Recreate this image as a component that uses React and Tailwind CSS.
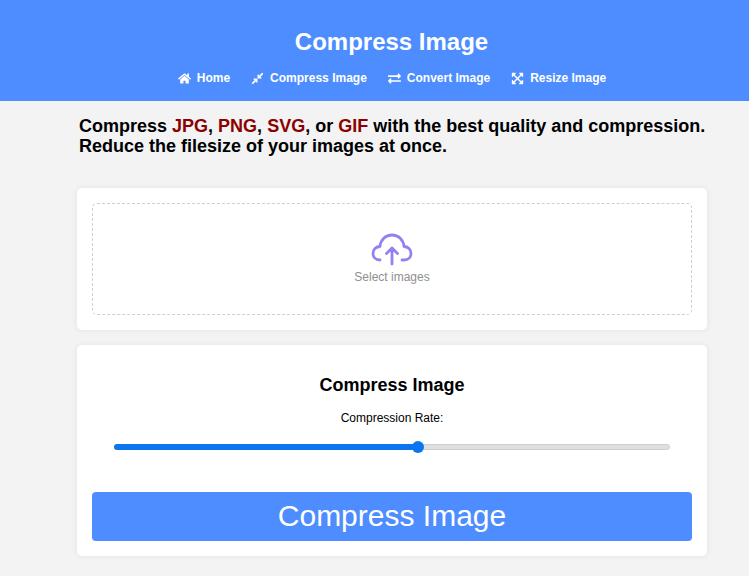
import { FaHome, FaCompressAlt, FaExchangeAlt, FaExpandArrowsAlt } from "react-icons/fa";

const links = [
  { label: "Home", icon: FaHome },
  { label: "Compress Image", icon: FaCompressAlt },
  { label: "Convert Image", icon: FaExchangeAlt },
  { label: "Resize Image", icon: FaExpandArrowsAlt },
];

function Header() {
  return (
    <header className="h-[101px] bg-[#4d8dff] pl-[34px] text-white flex flex-col items-center">
      <h1 className="mt-[27px] text-[24px] leading-[30px] font-bold">Compress Image</h1>
      <nav className="mt-[13px] ml-[1px] flex gap-[21px] text-[12px] leading-[16px] font-bold">
        {links.map(({ label, icon: Icon }) => (
          <a key={label} className="flex items-center gap-[6px]">
            <Icon className="text-[13px]" />
            {label}
          </a>
        ))}
      </nav>
    </header>
  );
}

function UploadCard() {
  return (
    <section className="h-[142px] rounded-[5px] bg-white p-[15px] shadow-[0_0_6px_rgba(0,0,0,0.07)]">
      <div className="h-full rounded-[5px] border border-dashed border-[#cfcfcf] flex flex-col items-center pt-[29px]">
        {/* cloud with arrow */}
        <svg width="42" height="36" viewBox="0 0 42 36" fill="none" stroke="#9680f0" strokeWidth="2.8" strokeLinecap="round" strokeLinejoin="round">
          <path d="M9 27C4.500 27 2 24 2 20.500C2 16.500 5 13.500 9 13.500C9.500 7 14.500 2 21 2C27.500 2 32.500 7 33 13.500C37 13.500 40 16.500 40 20.500C40 24 37.500 27 33 27H31" />
          <path d="M21 31V15M15.500 20.500L21 15 26.500 20.500" />
        </svg>
        <p className="mt-[1px] text-[12px] leading-[14px] text-[#8f8f8f]">Select images</p>
      </div>
    </section>
  );
}

function CompressCard() {
  return (
    <section className="mt-[15px] h-[211px] rounded-[5px] bg-white px-[15px] pt-[29px] shadow-[0_0_6px_rgba(0,0,0,0.07)] flex flex-col items-center">
      <h2 className="text-[18px] leading-[22px] font-bold text-black">Compress Image</h2>
      <p className="mt-[15px] text-[12px] leading-[14px] text-black">Compression Rate:</p>
      <div className="mt-[19px] relative w-[556px] h-[6px] rounded-full bg-[#e0e0e0] border border-[#cfcfcf]">
        <div className="absolute -left-px -top-px h-[6px] w-[304px] rounded-full bg-[#0b75f0]" />
        <div className="absolute left-[297px] top-[-4px] w-[12px] h-[12px] rounded-full bg-[#0b75f0]" />
      </div>
      <button className="mt-[42px] w-full h-[49px] rounded-[4px] bg-[#4d8dff] pb-[2px] text-white text-[30px] leading-[47px]">
        Compress Image
      </button>
    </section>
  );
}

export default function App() {
  return (
    <div className="min-h-[576px] h-screen overflow-hidden bg-[#f3f3f3] font-['Liberation_Sans',Arial,sans-serif]">
      <Header />
      <main className="ml-[77px] w-[630px]">
        <p className="mt-[15px] ml-[2px] w-[640px] text-[18px] leading-[20px] font-bold text-black whitespace-nowrap">
          Compress <span className="text-[#8b0000]">JPG</span>, <span className="text-[#8b0000]">PNG</span>, <span className="text-[#8b0000]">SVG</span>, or <span className="text-[#8b0000]">GIF</span> with the best quality and compression.
          <br />
          Reduce the filesize of your images at once.
        </p>
        <div className="mt-[32px]">
          <UploadCard />
          <CompressCard />
        </div>
      </main>
    </div>
  );
}
